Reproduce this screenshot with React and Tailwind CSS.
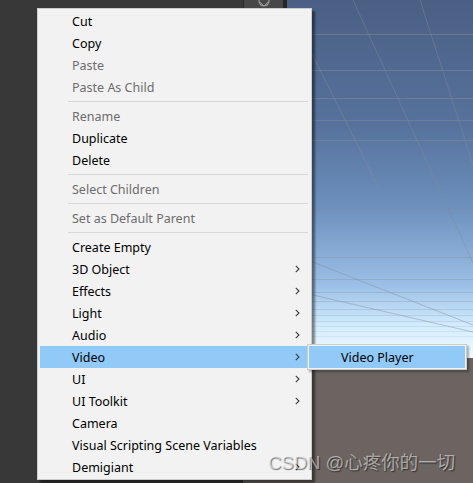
import React from 'react';

const groups = [
  [
    { label: 'Cut' },
    { label: 'Copy' },
    { label: 'Paste', disabled: true },
    { label: 'Paste As Child', disabled: true },
  ],
  [
    { label: 'Rename', disabled: true },
    { label: 'Duplicate' },
    { label: 'Delete' },
  ],
  [{ label: 'Select Children', disabled: true }],
  [{ label: 'Set as Default Parent', disabled: true }],
  [
    { label: 'Create Empty' },
    { label: '3D Object', sub: true },
    { label: 'Effects', sub: true },
    { label: 'Light', sub: true },
    { label: 'Audio', sub: true },
    { label: 'Video', sub: true, active: true },
    { label: 'UI', sub: true },
    { label: 'UI Toolkit', sub: true },
    { label: 'Camera' },
    { label: 'Visual Scripting Scene Variables' },
    { label: 'Demigiant', sub: true },
  ],
];

const Chevron = () => (
  <svg width="5" height="8" viewBox="0 0 5 8" className="shrink-0 -mt-[2px]">
    <path d="M0.8 0.8 L4 4 L0.8 7.2" fill="none" stroke="#3c3c3c" strokeWidth="1.1" />
  </svg>
);

const MenuItem = ({ label, disabled, sub, active }) => (
  <div
    className={`h-[22px] ml-[2px] mr-[4px] pl-[32px] pr-[7px] pt-[2px] flex items-center justify-between ${
      active ? 'bg-[#91c9f7]' : ''
    }`}
  >
    <span className={disabled ? 'text-[#6d6d6d]' : 'text-black'}>{label}</span>
    {sub && <Chevron />}
  </div>
);

const SceneGrid = () => {
  // page coords shifted by scene left (243)
  const ox = 243;
  const hs = [
    [34, 0.5], [70, 0.5], [98, 0.5], [120, 0.45], [140, 0.45], [208, 0.45], [257, 0.4],
    [279, 0.35], [292, 0.3], [301, 0.28], [309, 0.25], [315, 0.22], [321, 0.2], [326, 0.18],
    [331, 0.15], [336, 0.12],
  ];
  const diag = [
    [353, 0, 473, 263],
    [420, 0, 473, 165],
    [300, 30, 380, 190],
    [300, 257, 473, 325],
    [300, 292, 473, 332],
  ];
  return (
    <svg className="absolute inset-0" width="230" height="358" viewBox="0 0 230 358">
      {hs.map(([y, o]) => (
        <line key={y} x1="0" y1={y + 0.5} x2="230" y2={y + 0.5} stroke="#858c96" strokeOpacity={o} strokeWidth="1" />
      ))}
      {diag.map(([x1, y1, x2, y2], i) => (
        <line key={i} x1={x1 - ox} y1={y1} x2={x2 - ox} y2={y2} stroke="#858c96" strokeOpacity="0.45" strokeWidth="1" />
      ))}
    </svg>
  );
};

export default function App() {
  return (
    <div className="relative w-[473px] h-[483px] overflow-hidden flex bg-[#383838] font-['Noto_Sans','Liberation_Sans',sans-serif] text-[12.5px]">
      <div className="w-[243px] shrink-0 bg-[#383838]" />
      <div className="flex-1 flex flex-col">
        <div className="relative h-[358px] bg-[linear-gradient(to_bottom,#4b5f84_0%,#56729c_35%,#6d90bd_58%,#9cc0e7_80%,#d3edff_91%,#f0fbff_100%)]">
          <SceneGrid />
        </div>
        <div className="flex-1 bg-[#6b6461]" />
      </div>

      {/* gizmo toolbar strip */}
      <div className="absolute left-[243px] top-0 w-[44px] h-[9px] bg-[#474747] border-l border-r-[4px] border-l-[#2a2a2a] border-r-[#262626] flex justify-center">
        <svg width="16" height="9" viewBox="0 0 16 9">
          <circle cx="8" cy="1" r="5" fill="none" stroke="#9a9a9a" strokeWidth="1.2" />
          <path d="M4 2 L8 6 L12 2" fill="none" stroke="#9a9a9a" strokeWidth="1" />
        </svg>
      </div>

      {/* context menu */}
      <div className="absolute left-[37px] top-[8px] w-[275px] h-[472px] bg-[#f2f2f2] border border-[#cccccc] py-[1px] shadow-[3px_3px_2px_rgba(0,0,0,0.45)]">
        {groups.map((g, gi) => (
          <div key={gi}>
            {gi > 0 && (
              <div className="h-[7px] flex items-center ml-[30px] mr-[3px]">
                <div className="w-full border-t border-[#d7d7d7]" />
              </div>
            )}
            {g.map((it) => (
              <MenuItem key={it.label} {...it} />
            ))}
          </div>
        ))}
      </div>

      {/* submenu */}
      <div className="absolute left-[307px] top-[344px] w-[160px] h-[26px] bg-[#f2f2f2] border border-[#cccccc] p-[1px] shadow-[2px_2px_2px_rgba(0,0,0,0.3)]">
        <div className="h-[22px] bg-[#91c9f7] pl-[32px] pt-[2px] flex items-center text-black">Video Player</div>
      </div>

      {/* watermark */}
      <div className="absolute left-[268px] top-[450px] text-[18.5px] leading-[26px] text-white/50 [text-shadow:1px_1px_1px_rgba(0,0,0,0.5)] font-['Liberation_Sans','Noto_Sans_CJK_SC',sans-serif] whitespace-nowrap">
        CSDN @心疼你的一切
      </div>
    </div>
  );
}
